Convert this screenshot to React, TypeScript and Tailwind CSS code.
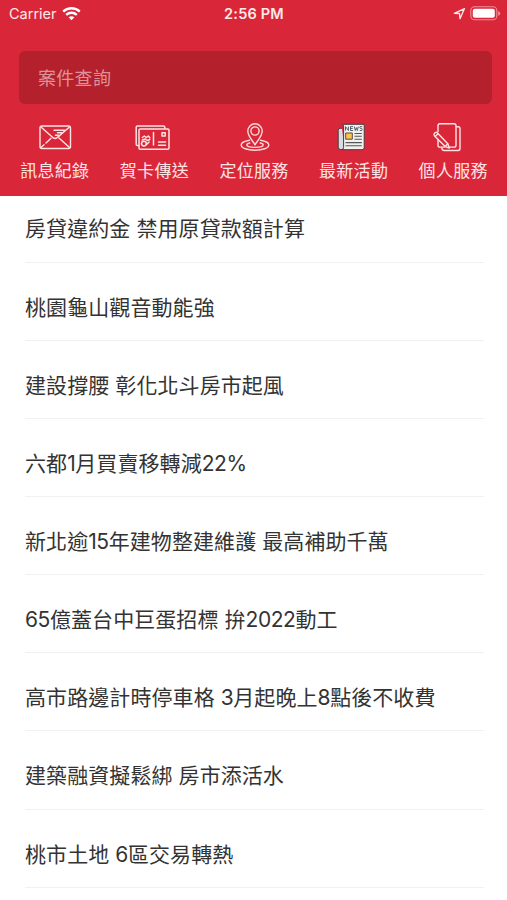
import * as React from "react";

const MailIcon = () => (
  <svg
    width="34"
    height="30"
    viewBox="0 0 34 30"
    fill="none"
    stroke="#ffe4e4"
    strokeWidth="1.4"
    strokeLinecap="round"
    strokeLinejoin="round"
  >
    <rect x="2" y="4" width="30.5" height="22.5" rx="2" />
    <path d="M3 5l11.8 10.6q2.2 2 4.4 0L31.5 5" />
    <path d="M3 25.5l3-2.7M8 21l5-4.7M31.5 25.5L21 16" />
    <path d="M16 8.2h10.5M19.5 10.8h4.5M17.5 13.2h3" />
  </svg>
);

const CardIcon = () => (
  <svg
    className="-ml-[4px]"
    width="36"
    height="30"
    viewBox="0 0 36 30"
    fill="none"
    stroke="#ffe4e4"
    strokeWidth="1.5"
    strokeLinecap="round"
    strokeLinejoin="round"
  >
    <path d="M5 23.5H3.5q-1.3 0-1.3-1.3V5.2q0-1.3 1.3-1.3h26q1.3 0 1.3 1.3V6" />
    <rect x="5" y="7" width="30" height="20.3" rx="1.3" />
    <path d="M19.5 10.5v12.5M24.5 20h7M24.5 23.3h7" />
    <rect x="28" y="10.8" width="3.2" height="3.2" />
    <circle cx="9.9" cy="21.6" r="2.4" />
    <path d="M8.3 15.5l2-1.5 2 1.5 2-1.5 1.5 1.8M8.3 18l3-1 2 1.5 2.5-1M12.6 22.5l2.5-2.5" />
  </svg>
);

const PinIcon = () => (
  <svg
    className="ml-[3px]"
    width="30"
    height="30"
    viewBox="0 0 30 30"
    fill="none"
    stroke="#ffdada"
    strokeWidth="1.4"
    strokeLinecap="round"
    strokeLinejoin="round"
  >
    <path d="M15 22.8C12.5 18.5 7.8 14.2 7.8 9a7.2 7.2 0 0 1 14.4 0c0 5.2-4.7 9.5-7.2 13.8z" />
    <circle cx="15" cy="9" r="4.1" />
    <path d="M9.5 18.2C4.5 19 1.2 20.8 1.2 23c0 3.1 6.2 5.2 13.8 5.2s13.8-2.1 13.8-5.2c0-2.2-3.3-4-8.3-4.8" />
    <path d="M9.8 21c-2 .4-3 1.1-3 1.8 0 1.5 3.8 2.6 8.2 2.6s8.2-1.1 8.2-2.6c0-.7-1-1.4-3-1.8" />
  </svg>
);

const NewsIcon = () => (
  <svg
    className="-ml-[5px]"
    width="30"
    height="30"
    viewBox="0 0 30 30"
    strokeLinejoin="round"
  >
    <path
      d="M6 6.3H4.2q-2 0-2 2v16.9q0 2.3 2.4 2.3h4"
      fill="#d9dbe0"
      stroke="#493a40"
      strokeWidth="1"
    />
    <path
      d="M6.5 2.3h21.7v23.2q0 2.2-2.2 2.2H5.8q1.8-.3 1.8-2.4V4z"
      fill="#f1f2ee"
      stroke="#493a40"
      strokeWidth="1"
    />
    <path
      d="M9.5 8.5V4.6l2.9 3.9V4.6M17 4.6h-2.5v3.9H17M14.5 6.5h2.2M18.3 4.6l1 3.9 1-2.9 1 2.9 1-3.9M26.2 4.6h-2q-.8.9 0 1.7l1.6.3q.8.9 0 1.9h-2"
      fill="none"
      stroke="#46545e"
      strokeWidth=".9"
    />
    <path d="M9.7 11h6.6v6.2H9.7z" fill="#f9c64e" stroke="#5b4a3c" />
    <path
      d="M18.5 11.5h7.3M18.5 14.3h7.3M18.5 17.2h7.3M9.5 20.6h16.3M9.5 23.8h16.3"
      stroke="#52565d"
      strokeWidth="1.1"
    />
  </svg>
);

const NoteIcon = () => (
  <svg
    className="-ml-[12px]"
    width="30"
    height="30"
    viewBox="0 0 30 30"
    fill="none"
    stroke="#ffe4e4"
    strokeWidth="1.4"
    strokeLinecap="round"
    strokeLinejoin="round"
  >
    <path d="M6 9.5V3.7q0-1.9 1.9-1.9h14.2q1.9 0 1.9 1.9v19.5q0 1.9-1.9 1.9H17.5M6 17.5v5.7q0 1.9 1.9 1.9h4.6" />
    <path d="M24.5 4.7h1.6q1.9 0 1.9 1.9v20q0 1.9-1.9 1.9h-14q-1.9 0-2.4-2.6" />
    <path d="M2.5 11.3q1.5-1.8 3-.3L16 22l1.3 4-4.1-1.4L2.6 14q-1.3-1.3-.1-2.7zM3.3 14.3l2.8-2.6M13.2 24.2l2.8-2.4" />
  </svg>
);

const MENU = [
  { label: "訊息紀錄", icon: <MailIcon /> },
  { label: "賀卡傳送", icon: <CardIcon /> },
  { label: "定位服務", icon: <PinIcon /> },
  { label: "最新活動", icon: <NewsIcon /> },
  { label: "個人服務", icon: <NoteIcon /> },
];

const NEWS = [
  "房貸違約金 禁用原貸款額計算",
  "桃園龜山觀音動能強",
  "建設撐腰 彰化北斗房市起風",
  "六都1月買賣移轉減22%",
  "新北逾15年建物整建維護 最高補助千萬",
  "65億蓋台中巨蛋招標 拚2022動工",
  "高市路邊計時停車格 3月起晚上8點後不收費",
  "建築融資擬鬆綁 房市添活水",
  "桃市土地 6區交易轉熱",
];

// digits are set a little tighter than the Chinese text
const Title = ({ text }: { text: string }) => (
  <span className="whitespace-pre">
    {text.split(/([\d%]+)/).map((part, i) =>
      i % 2 ? (
        <span className="tracking-[-0.45px]" key={i}>
          {part}
        </span>
      ) : (
        part
      )
    )}
  </span>
);

const StatusBar = () => (
  <div className="grid h-7 grid-cols-3 items-center pl-[9px] pr-[6px] text-[14.5px] leading-none text-[#ffe9e9]">
    <div className="flex items-center gap-[5px]">
      <span>Carrier</span>
      <svg
        width="19"
        height="14"
        viewBox="0 0 19 14"
        fill="none"
        stroke="#fff"
        strokeWidth="2.3"
      >
        <path d="M1.2 4.6a12 12 0 0 1 16.6 0M4.2 7.9a7.6 7.6 0 0 1 10.6 0" />
        <path
          d="M9.5 13.3l-2.9-3q2.9-2.3 5.8 0z"
          fill="#fff"
          stroke="none"
        />
      </svg>
    </div>
    <span className="-ml-[2px] text-center font-semibold tracking-[0.2px]">
      2:56 PM
    </span>
    <div className="-mt-px flex items-center justify-end gap-1">
      <svg
        width="13"
        height="13"
        viewBox="0 0 13 13"
        fill="none"
        stroke="#ffe9e9"
        strokeWidth="1.3"
        strokeLinejoin="round"
      >
        <path d="M1.3 6.3L11.5 1.6 7 11.7l-.5-5.2z" />
      </svg>
      <svg width="31" height="15" viewBox="0 0 31 15">
        <rect
          x=".8"
          y=".8"
          width="26"
          height="13"
          rx="3.8"
          fill="none"
          stroke="#ef8f98"
          strokeWidth="1.1"
        />
        <rect x="2.8" y="2.8" width="22" height="9" rx="2" fill="#fff" />
        <path d="M28.2 5q2 .8 2 2.4t-2 2.4z" fill="#ef8f98" />
      </svg>
    </div>
  </div>
);

const App = () => (
  <div className="flex h-[900px] w-[507px] flex-col overflow-hidden bg-white font-[Inter,'Noto_Sans_CJK_TC',sans-serif]">
    <header className="h-[196px] shrink-0 bg-[#d92739]">
      <StatusBar />
      <div className="ml-[19px] mr-[15px] mt-[23px] flex h-[53px] items-center rounded-[6px] bg-[#b5202d] pl-[19px] pt-px text-[18px] tracking-[0.3px] text-[#dd9298]">
        案件查詢
      </div>
      <nav className="mt-[18px] grid grid-cols-5 pl-[5px] pr-[4px]">
        {MENU.map((item) => (
          <div className="flex flex-col items-center" key={item.label}>
            {item.icon}
            <span className="mt-[7px] whitespace-nowrap text-[17px] leading-[24px] tracking-[0.3px] text-[#ffe4e4]">
              {item.label}
            </span>
          </div>
        ))}
      </nav>
    </header>
    <ul className="flex flex-col gap-[12px] pl-[25px] pr-[23px] pt-[0.4px]">
      {NEWS.map((title) => (
        <li
          className="flex h-[66.15px] shrink-0 items-center border-b border-[#f1f1f1] pt-px text-[21px] leading-[30px] tracking-[0.08px] text-[#333]"
          key={title}
        >
          <Title text={title} />
        </li>
      ))}
    </ul>
  </div>
);

export default App;
